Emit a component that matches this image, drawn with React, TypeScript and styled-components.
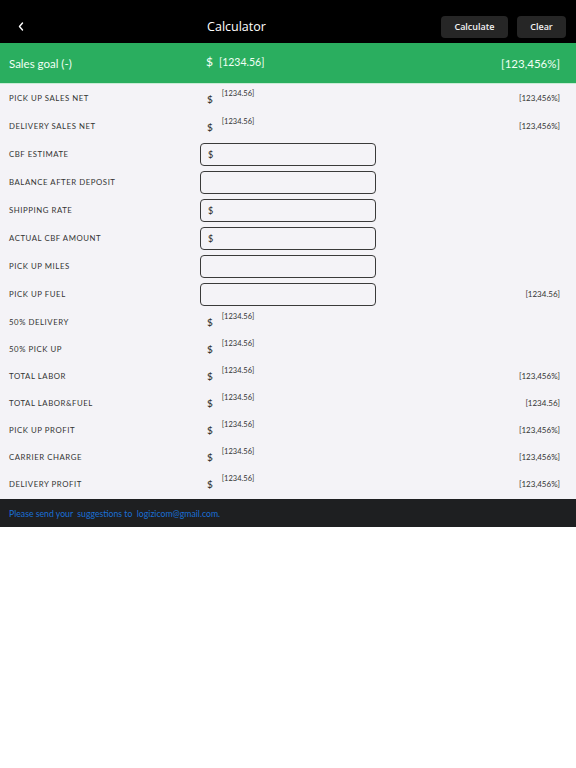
import React from 'react';
import styled, { createGlobalStyle } from 'styled-components';

const GlobalStyle = createGlobalStyle`
  html, body {
    margin: 0;
    padding: 0;
    background: #ffffff;
  }
  body {
    font-family: Lato, "Noto Sans", sans-serif;
  }
`;

const Page = styled.div`
  width: 576px;
  display: flex;
  flex-direction: column;
`;

const Header = styled.header`
  height: 43px;
  background: #000;
  display: flex;
  align-items: center;
  padding: 10px 10px 0 14px;
  box-sizing: border-box;
`;

const BackButton = styled.button`
  width: 14px;
  height: 20px;
  background: none;
  border: none;
  padding: 0;
  display: flex;
  align-items: center;
  justify-content: center;
`;

const Title = styled.h1`
  flex: 1;
  margin: 0;
  text-align: center;
  color: #fff;
  font-family: "Open Sans", "Noto Sans", sans-serif;
  font-size: 12.5px;
  font-weight: 400;
  padding-left: 4px;
`;

const Actions = styled.div`
  display: flex;
  gap: 9px;
`;

const HeadButton = styled.button<{ $w: number }>`
  width: ${(p) => p.$w}px;
  height: 22px;
  border: none;
  border-radius: 4px;
  background: #262626;
  color: #f2f2f2;
  font-family: "Open Sans", sans-serif;
  font-size: 9px;
  font-weight: 600;
  padding: 0;
`;

const GoalBar = styled.div`
  height: 40px;
  background: #2aae5f;
  display: grid;
  grid-template-columns: 197px 1fr auto;
  align-items: center;
  padding: 0 16px 0 9px;
  color: #f1fff5;
  border-bottom: 1px solid #c9ecd6;
`;

const GoalLabel = styled.span`
  font-size: 11.5px;
`;

const GoalValue = styled.span`
  display: flex;
  align-items: flex-start;
  gap: 6px;
  font-size: 10.5px;
  margin-top: -2px;
`;

const Dollar = styled.span<{ $size: number; $color: string }>`
  font-size: ${(p) => p.$size}px;
  color: ${(p) => p.$color};
  font-weight: 500;
  line-height: 1;
`;

const Body = styled.div`
  background: #f4f3f7;
  padding-bottom: 2px;
`;

const Row = styled.div<{ $h: number }>`
  height: ${(p) => p.$h}px;
  display: grid;
  grid-template-columns: 191px 176px 1fr;
  align-items: center;
  padding: 0 16px 0 9px;
`;

const Label = styled.span`
  font-size: 7.8px;
  letter-spacing: 0.55px;
  color: #333;
  text-transform: uppercase;
`;

const ValueCell = styled.div`
  display: flex;
  align-items: flex-start;
  gap: 9px;
  padding-left: 7px;
  margin-top: 1px;
`;

const Small = styled.span`
  font-size: 7.5px;
  color: #333;
  margin-top: -5px;
`;

const Field = styled.div`
  height: 23px;
  box-sizing: border-box;
  border: 1.5px solid #3a3a3a;
  border-radius: 4px;
  display: flex;
  align-items: center;
  padding-left: 7px;
`;

const Right = styled.span`
  justify-self: end;
  font-size: 8px;
  color: #333;
`;

const Footer = styled.footer`
  height: 28px;
  background: #1e1f21;
  display: flex;
  align-items: center;
  padding: 0 9px;
`;

const FooterText = styled.span`
  color: #1a6fd6;
  font-size: 8.7px;
  white-space: pre;
`;

type RowDef = {
  label: string;
  kind: 'value' | 'input';
  dollar?: boolean;
  right?: string;
};

const rows: RowDef[] = [
  { label: 'Pick up sales net', kind: 'value', right: '[123,456%]' },
  { label: 'Delivery sales net', kind: 'value', right: '[123,456%]' },
  { label: 'CBF estimate', kind: 'input', dollar: true },
  { label: 'Balance after deposit', kind: 'input' },
  { label: 'Shipping rate', kind: 'input', dollar: true },
  { label: 'Actual CBF amount', kind: 'input', dollar: true },
  { label: 'Pick up miles', kind: 'input' },
  { label: 'Pick up fuel', kind: 'input', right: '[1234.56]' },
  { label: '50% delivery', kind: 'value' },
  { label: '50% pick up', kind: 'value' },
  { label: 'Total labor', kind: 'value', right: '[123,456%]' },
  { label: 'Total labor&fuel', kind: 'value', right: '[1234.56]' },
  { label: 'Pick up profit', kind: 'value', right: '[123,456%]' },
  { label: 'Carrier charge', kind: 'value', right: '[123,456%]' },
  { label: 'Delivery profit', kind: 'value', right: '[123,456%]' },
];

const App: React.FC = () => {
  return (
    <Page>
      <GlobalStyle />
      <Header>
        <BackButton aria-label="back">
          <svg width="6" height="9" viewBox="0 0 6 9">
            <path d="M4.5 1 L1.5 4.5 L4.5 8" stroke="#fff" strokeWidth="1.4" fill="none" strokeLinecap="round" strokeLinejoin="round" />
          </svg>
        </BackButton>
        <Title>Calculator</Title>
        <Actions>
          <HeadButton $w={67}>Calculate</HeadButton>
          <HeadButton $w={49}>Clear</HeadButton>
        </Actions>
      </Header>

      <GoalBar>
        <GoalLabel>Sales goal (-)</GoalLabel>
        <GoalValue>
          <Dollar $size={12} $color="#f1fff5">$</Dollar>
          <span>[1234.56]</span>
        </GoalValue>
        <GoalLabel>[123,456%]</GoalLabel>
      </GoalBar>

      <Body>
        {rows.map((r, i) => (
          <Row key={r.label} $h={i < 8 ? 28 : 27}>
            <Label>{r.label}</Label>
            {r.kind === 'input' ? (
              <Field>{r.dollar && <Dollar $size={9} $color="#333">$</Dollar>}</Field>
            ) : (
              <ValueCell>
                <Dollar $size={10} $color="#333">$</Dollar>
                <Small>[1234.56]</Small>
              </ValueCell>
            )}
            {r.right ? <Right>{r.right}</Right> : <span />}
          </Row>
        ))}
      </Body>

      <Footer>
        <FooterText>Please send your  suggestions to  logizicom@gmail.com.</FooterText>
      </Footer>
    </Page>
  );
};

export default App;
